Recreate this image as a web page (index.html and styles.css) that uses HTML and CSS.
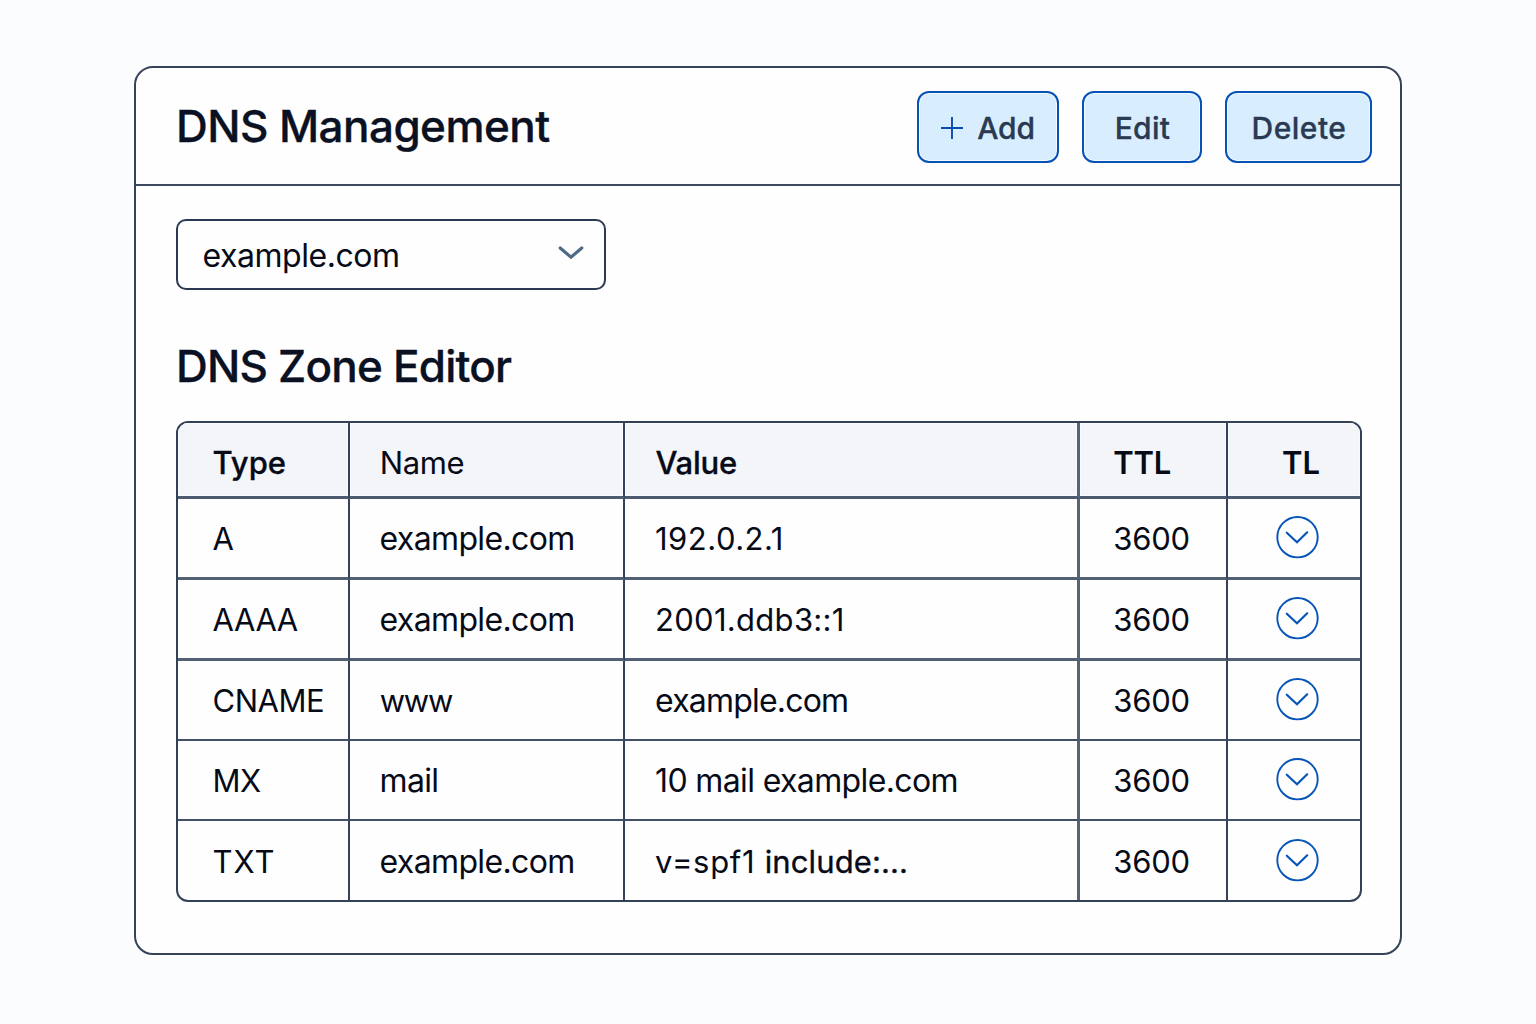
FILE: index.html
```html
<!DOCTYPE html>
<html lang="en">
<head>
<meta charset="utf-8">
<title>DNS Management</title>
<link rel="stylesheet" href="styles.css">
</head>
<body>
<svg class="sprite" aria-hidden="true">
  <symbol id="circle-chevron" viewBox="0 0 44 44">
    <circle cx="22.5" cy="22.2" r="20.2" stroke-width="1.9"/>
    <path d="M11.8 17.7 L22 27.3 L32.2 17.3" stroke-width="2.2" stroke-linecap="round"/>
  </symbol>
</svg>
<main class="card">
  <header class="card-header">
    <h1 class="title">DNS Management</h1>
    <div class="actions">
      <button class="btn btn-add"><svg class="plus" viewBox="0 0 22 22"><path d="M0 11H22M11 0V22"/></svg><span>Add</span></button>
      <button class="btn btn-edit">Edit</button>
      <button class="btn btn-delete">Delete</button>
    </div>
  </header>
  <div class="card-body">
    <div class="select" role="combobox" tabindex="0">
      <span>example.com</span>
      <svg class="caret" viewBox="0 0 28 18"><path d="M3.2 4 L14 13.2 L24.8 4"/></svg>
    </div>
    <h2 class="subtitle">DNS Zone Editor</h2>
    <div class="table" role="table">
      <div class="row head" role="row">
        <div class="cell type">Type</div>
        <div class="cell name regular">Name</div>
        <div class="cell value">Value</div>
        <div class="cell ttl">TTL</div>
        <div class="cell tl">TL</div>
      </div>
      <div class="row thick low" role="row">
        <div class="cell type">A</div>
        <div class="cell name host">example.com</div>
        <div class="cell value wide">192.0.2.1</div>
        <div class="cell ttl">3600</div>
        <div class="cell more"><svg class="icon"><use href="#circle-chevron"/></svg></div>
      </div>
      <div class="row thick low" role="row">
        <div class="cell type snug">AAAA</div>
        <div class="cell name host">example.com</div>
        <div class="cell value loose">2001.ddb3::1</div>
        <div class="cell ttl">3600</div>
        <div class="cell more"><svg class="icon"><use href="#circle-chevron"/></svg></div>
      </div>
      <div class="row low" role="row">
        <div class="cell type cname">CNAME</div>
        <div class="cell name tight">www</div>
        <div class="cell value host narrow">example.com</div>
        <div class="cell ttl">3600</div>
        <div class="cell more"><svg class="icon"><use href="#circle-chevron"/></svg></div>
      </div>
      <div class="row low" role="row">
        <div class="cell type cname">MX</div>
        <div class="cell name host">mail</div>
        <div class="cell value host">10 mail example.com</div>
        <div class="cell ttl">3600</div>
        <div class="cell more"><svg class="icon"><use href="#circle-chevron"/></svg></div>
      </div>
      <div class="row low last" role="row">
        <div class="cell type spaced">TXT</div>
        <div class="cell name host">example.com</div>
        <div class="cell value spf"><span class="spaced-sm">v=spf1&nbsp;</span><span class="mid">include:...</span></div>
        <div class="cell ttl">3600</div>
        <div class="cell more"><svg class="icon"><use href="#circle-chevron"/></svg></div>
      </div>
    </div>
  </div>
</main>
</body>
</html>
```
FILE: styles.css
```css
* { box-sizing: border-box; }

body {
  margin: 0;
  min-height: 1024px;
  padding: 66px 134px 69px;
  background: #fbfcfe;
  color: #070b18;
  font-family: Inter, "Liberation Sans", sans-serif;
  font-size: 31px;
  line-height: 38px;
}

.sprite { display: none; }

.card {
  width: 1268px;
  height: 889px;
  border: 2px solid #34425a;
  border-radius: 19px;
  background: #fefefe;
}

.card-header {
  display: flex;
  justify-content: space-between;
  align-items: flex-start;
  height: 118px;
  padding: 23px 28px 0 40px;
  border-bottom: 2px solid #3c495e;
}

.title,
.subtitle {
  margin: 0;
  color: #0a1122;
  font-size: 44px;
  font-weight: 500;
  line-height: 52px;
  -webkit-text-stroke: 0.35px #0a1122;
}

.title { margin-top: 9px; letter-spacing: -0.55px; }

.actions { display: flex; gap: 23px; }

.btn {
  display: flex;
  align-items: center;
  justify-content: center;
  height: 72px;
  padding: 2px 0 0;
  border: 2px solid #0751b7;
  border-radius: 12px;
  background: #d8eeff;
  box-shadow: inset 0 0 0 1px #f0faff;
  color: #2a3a52;
  font: 500 30px/36px Inter, "Liberation Sans", sans-serif;
  -webkit-text-stroke: 0.3px #2a3a52;
}

.btn-add { width: 142px; gap: 14px; letter-spacing: -0.2px; }
.btn-edit { width: 120px; padding-left: 1px; letter-spacing: 0.3px; }
.btn-delete { width: 147px; padding-left: 1px; letter-spacing: 0.5px; }

.plus { width: 22px; height: 22px; fill: none; stroke: #0a4bb0; stroke-width: 1.9; }

.card-body { padding: 33px 38px 0 40px; }

.select {
  display: flex;
  align-items: center;
  justify-content: space-between;
  width: 430px;
  height: 71px;
  padding: 2px 19px 0 24.5px;
  border: 2px solid #2b3a52;
  border-radius: 10px;
  font-size: 32px;
  letter-spacing: -0.45px;
}

.caret {
  width: 28px;
  height: 18px;
  margin-bottom: 5px;
  fill: none;
  stroke: #506a85;
  stroke-width: 3.2;
  stroke-linecap: round;
}

.subtitle { margin: 50px 0 29px; letter-spacing: -0.78px; }

.table {
  width: 1186px;
  height: 481px;
  border: 2px solid #334157;
  border-radius: 12px;
  overflow: hidden;
}

.row {
  display: grid;
  grid-template-columns: 172px 275px 455px 148px 132px;
  height: 80px;
}

.cell {
  display: flex;
  align-items: center;
  border-right: 2px solid #34425a;
  border-bottom: 2px solid #435167;
}

.row.thick { height: 81px; }
.row.thick .cell { border-bottom: 3px solid #526074; }
.row.low .cell:not(.more) { padding-top: 2px; }
.row.last { height: 79px; }
.row.last .cell { border-bottom: 0; }

.row.head { height: 76px; font-weight: 600; }
.row.head .cell {
  padding-top: 6px;
  border-bottom: 3px solid #4d5b70;
  background: #f3f5f9;
  box-shadow: inset 0 0 0 1px #fafbfe;
}
.row.head .regular { font-weight: 400; letter-spacing: -0.4px; }
.row.head .type,
.row.head .value { font-weight: 500; -webkit-text-stroke: 0.3px #070b18; }
.row.head .value { padding-left: 30.5px; letter-spacing: -0.25px; }

.type { padding-left: 34.5px; }
.name { padding-left: 29.8px; }
.cell.value { padding-left: 30px; border-right: 3px solid #56647a; }
.ttl { padding-left: 33.3px; letter-spacing: -0.25px; }
.row .cell:last-child { border-right: 0; }
.tl { padding-left: 54px; }
.row .more { padding-left: 47px; padding-bottom: 2px; }

.host { font-size: 32px; letter-spacing: -0.63px; }
.name.host { padding-left: 29.5px; }
.narrow { letter-spacing: -0.8px; }
.wide { letter-spacing: 0.5px; }
.loose { letter-spacing: 0.3px; }
.snug { letter-spacing: -0.4px; }
.cname { letter-spacing: -0.5px; }
.tight { letter-spacing: -1.3px; }
.spaced { letter-spacing: 1px; }
.spaced-sm { letter-spacing: 0.7px; }
.mid { letter-spacing: 0.1px; -webkit-text-stroke: 0.35px #070b18; }

.icon { width: 44px; height: 44px; fill: none; stroke: #0755b8; }
```
